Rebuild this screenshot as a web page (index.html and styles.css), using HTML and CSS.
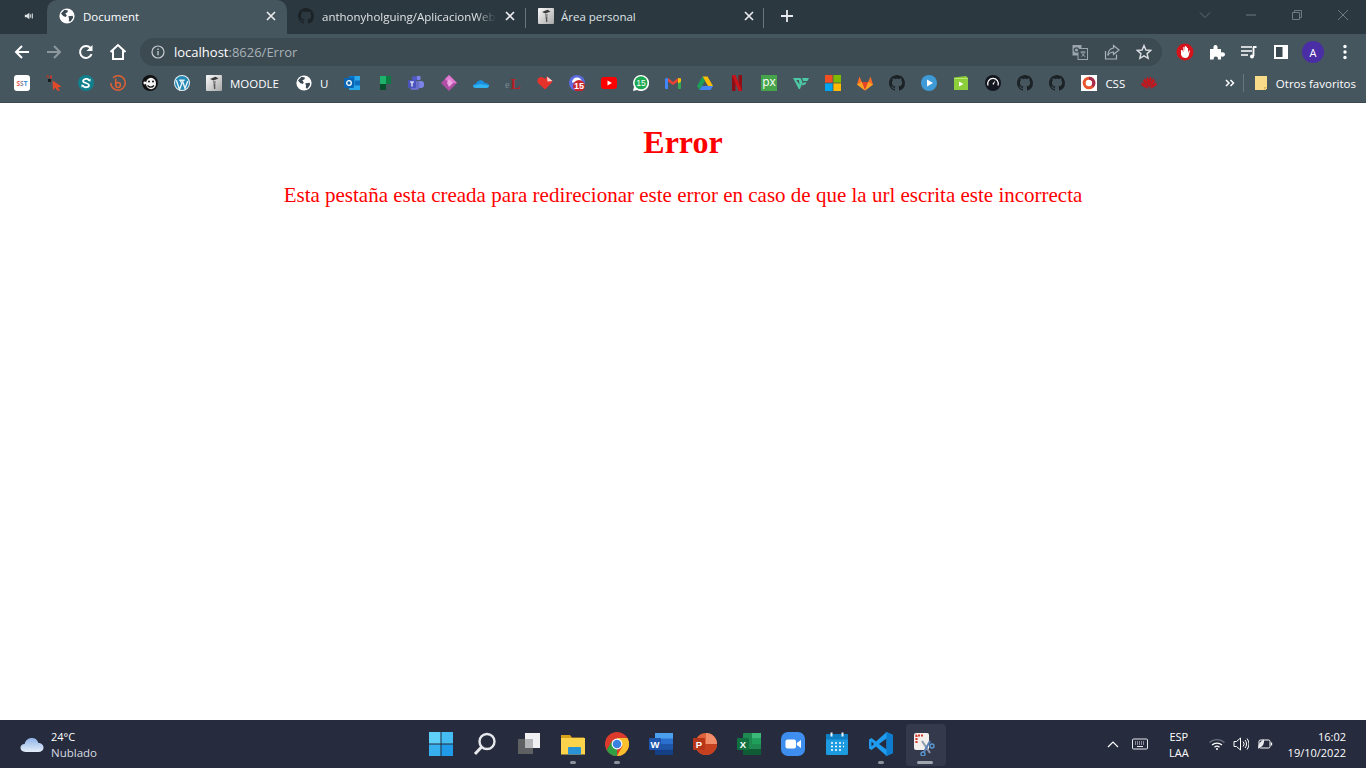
FILE: index.html
```html
<!DOCTYPE html>
<html lang="es">
<head>
<meta charset="utf-8">
<title>Document</title>
<link rel="stylesheet" href="styles.css">
</head>
<body>
<svg class="defs" aria-hidden="true">
  <symbol id="globe" viewBox="0 0 16 16"><circle cx="8" cy="8" r="7.6" fill="#fff"/><path d="M2 5.500 5.500 1.800 9 2.600 8.300 4.600 6.300 5.200 7.800 7.400 6.600 9 4.200 8.100ZM9.300 8.200 13.800 7.800 14 10 11.500 13.600 9.800 13.200 10 10.600Z" fill="#3b4952"/></symbol>
  <symbol id="gh" viewBox="0 0 16 16"><path fill="#1c2327" d="M8 0C3.58 0 0 3.58 0 8c0 3.54 2.29 6.53 5.47 7.59.4.07.55-.17.55-.38 0-.19-.01-.82-.01-1.49-2.01.37-2.53-.49-2.69-.94-.09-.23-.48-.94-.82-1.13-.28-.15-.68-.52-.01-.53.63-.01 1.08.58 1.23.82.72 1.21 1.87.87 2.33.66.07-.52.28-.87.51-1.07-1.78-.2-3.64-.89-3.64-3.95 0-.87.31-1.59.82-2.15-.08-.2-.36-1.02.08-2.12 0 0 .67-.21 2.2.82.64-.18 1.32-.27 2-.27.68 0 1.36.09 2 .27 1.53-1.04 2.2-.82 2.2-.82.44 1.1.16 1.92.08 2.12.51.56.82 1.27.82 2.15 0 3.07-1.87 3.75-3.65 3.95.29.25.54.73.54 1.48 0 1.07-.01 1.93-.01 2.2 0 .21.15.46.55.38A8.013 8.013 0 0016 8c0-4.42-3.58-8-8-8z"/></symbol>
  <symbol id="moodle" viewBox="0 0 16 16"><defs><linearGradient id="mg" x1="0" y1="0" x2="1" y2="1"><stop offset="0" stop-color="#fafafa"/><stop offset="1" stop-color="#a8a8a8"/></linearGradient></defs><rect width="16" height="16" rx="1" fill="url(#mg)"/><path d="M4 4 9.500 1.800 12.500 3.600 7.500 5.500Z" fill="#3a3a3a"/><path d="M7 6h2.800l-.3 3 .2 5H8L7.300 9Z" fill="#8a8a8a"/><path d="M8.500 9v5" stroke="#4a4a4a" stroke-width=".8"/></symbol>
  <symbol id="close" viewBox="0 0 12 12"><path d="M2 2l8 8M10 2l-8 8" stroke="#e8eaed" stroke-width="1.7" fill="none"/></symbol>
</svg>

<div class="browser">
  <header class="tabstrip">
    <div class="tab-pinned">
      <svg class="i10" viewBox="0 0 12 12"><path d="M1 4.500h2.200L6.500 2v8L3.200 7.500H1Z" fill="#dfe3e6"/><path d="M8 4v4M10 3v6" stroke="#dfe3e6" stroke-width="1.200"/></svg>
    </div>
    <div class="tab tab-active">
      <svg class="i16"><use href="#globe"/></svg>
      <span class="tab-title">Document</span>
      <svg class="i12"><use href="#close"/></svg>
    </div>
    <div class="tab tab-gh">
      <svg class="i16"><use href="#gh"/></svg>
      <span class="tab-title tab-fade">anthonyholguing/AplicacionWeb</span>
      <svg class="i12"><use href="#close"/></svg>
    </div>
    <div class="tab tab-sep">
      <svg class="i16"><use href="#moodle"/></svg>
      <span class="tab-title">Área personal</span>
      <svg class="i12"><use href="#close"/></svg>
    </div>
    <button class="newtab">
      <svg class="i14" viewBox="0 0 14 14"><path d="M7 1v12M1 7h12" stroke="#e8eaed" stroke-width="1.800"/></svg>
    </button>
    <div class="winctl">
      <svg class="ctl" viewBox="0 0 12 12"><path d="M1 3.500 6 8.500 11 3.500" stroke="#5f6c75" fill="none"/></svg>
      <svg class="ctl" viewBox="0 0 12 12"><path d="M1 6h10" stroke="#6d7a83"/></svg>
      <svg class="ctl" viewBox="0 0 12 12"><path d="M1.500 3.500h7v7h-7ZM3.500 3.500v-2h7v7h-2" stroke="#6d7a83" fill="none"/></svg>
      <svg class="ctl" viewBox="0 0 12 12"><path d="M1 1l10 10M11 1 1 11" stroke="#6d7a83" fill="none"/></svg>
    </div>
  </header>

  <nav class="toolbar">
    <div class="navbtn"><svg class="i16" viewBox="0 0 16 16"><path d="M15 8H2M8 2 2 8l6 6" stroke="#fff" stroke-width="2" fill="none"/></svg></div>
    <div class="navbtn"><svg class="i16" viewBox="0 0 16 16"><path d="M1 8h13M8 2l6 6-6 6" stroke="#8c979e" stroke-width="2" fill="none"/></svg></div>
    <div class="navbtn"><svg class="i16" viewBox="0 0 16 16"><path d="M13.600 10.200A6 6 0 1 1 12.600 4" stroke="#fff" stroke-width="2" fill="none"/><path d="M14.500 1v6h-6Z" fill="#fff"/></svg></div>
    <div class="navbtn"><svg class="i18" viewBox="0 0 18 18"><path d="M1.500 9 9 2l7.500 7M4 7.500V16h10V7.500" stroke="#fff" stroke-width="2" fill="none"/></svg></div>
    <div class="omnibox">
      <svg class="i14" viewBox="0 0 14 14"><circle cx="7" cy="7" r="6" stroke="#c6ccd0" stroke-width="1.200" fill="none"/><path d="M7 6v4.200M7 3.600v1.300" stroke="#c6ccd0" stroke-width="1.300"/></svg>
      <span class="url"><span class="host">localhost</span><span class="path">:8626/Error</span></span>
      <div class="omni-actions">
        <svg class="i16" viewBox="0 0 16 16"><rect x="0.500" y="1" width="9" height="10.500" fill="#9aa4aa"/><rect x="6" y="4.500" width="9.500" height="11" fill="#3c4a52" stroke="#9aa4aa"/><circle cx="4.500" cy="6" r="2.200" fill="none" stroke="#3c4a52" stroke-width="1.200"/><path d="M8.500 8h5M11 7v1M9.500 8c.5 2 2 4 3.800 4.500M12.500 8c-.5 2-1.500 3.500-3 4.500" stroke="#9aa4aa" fill="none"/></svg>
        <svg class="i16" viewBox="0 0 16 16"><path d="M1.500 7v8h11v-4.500" stroke="#aab3b9" stroke-width="1.200" fill="none"/><path d="M9.500 1.500 15 6 9.500 10.500V8C6.500 8 5 9.500 3.800 11.500 4 7.500 6 4.500 9.500 4Z" stroke="#aab3b9" stroke-width="1.200" fill="none"/></svg>
        <svg class="i16" viewBox="0 0 16 16"><path d="M8 1.500 9.900 6 14.800 6.400 11.100 9.600 12.200 14.400 8 11.900 3.800 14.400 4.900 9.600 1.200 6.400 6.100 6Z" stroke="#d9dde0" stroke-width="1.400" fill="none"/></svg>
      </div>
    </div>
    <div class="extensions">
      <div class="navbtn"><svg class="i18" viewBox="0 0 18 18"><circle cx="9" cy="9" r="8.500" fill="#d5131b"/><path d="M5 8v3.500C5.500 14 7.500 15 9.500 15c2 0 3.300-1.500 3.500-3.500l1-4-1 0-1 2.500V5h-1v3.500V3.700H9.800V8.500V3H8.800v5.500L8.300 4H7.300v5.500L6.300 7H5Z" fill="#fff"/></svg></div>
      <div class="navbtn"><svg class="i16" viewBox="0 0 16 16"><path d="M1 5h3.500C4 2.500 5 1 6.500 1S9 2.500 8.500 5H12v3.500C14.500 8 16 9 16 10.500S14.500 13 12 12.500V15.500H8.800C9.300 13.500 8.300 12.500 6.800 12.500S4.300 13.500 4.800 15.500H1Z" fill="#fff"/></svg></div>
      <div class="navbtn"><svg class="i16" viewBox="0 0 16 16"><path d="M0 3h11M0 7h11M0 11h7" stroke="#fff" stroke-width="1.400"/><path d="M12 3h3.500M12.500 3v9" stroke="#fff" stroke-width="1.800" fill="none"/><circle cx="11" cy="12.500" r="2" fill="#fff"/></svg></div>
      <div class="navbtn"><svg class="i14" viewBox="0 0 14 14"><rect width="14" height="14" fill="#fff"/><rect x="2" y="2" width="6.500" height="10" fill="#3a4851"/></svg></div>
      <div class="navbtn"><span class="avatar">A</span></div>
      <div class="navbtn"><svg class="i16" viewBox="0 0 16 16"><circle cx="8" cy="2.500" r="1.700" fill="#fff"/><circle cx="8" cy="8" r="1.700" fill="#fff"/><circle cx="8" cy="13.500" r="1.700" fill="#fff"/></svg></div>
    </div>
  </nav>

  <div class="bookmarks">
    <div class="bm"><svg class="i16" viewBox="0 0 16 16"><rect width="16" height="16" rx="3" fill="#fff"/><text x="8" y="10.700" class="t-sst"><tspan fill="#e2574c">S</tspan><tspan fill="#8a8a8a">S</tspan><tspan fill="#3e8ed0">T</tspan></text></svg></div>
    <div class="bm"><svg class="i16" viewBox="0 0 16 16"><path d="M6.500 5.500 15.500 11.500 12 12.500 14 16 11 15.500 9.500 12.500 7 15Z" fill="#e0492a"/><rect x="0.500" y="0.500" width="2.500" height="2" fill="#b03a30"/><rect x="4" y="0.500" width="2" height="3" fill="#c43a2c"/><rect x="2" y="4" width="3" height="3" fill="#1b1b1b"/></svg></div>
    <div class="bm"><svg class="i16" viewBox="0 0 16 16"><circle cx="8" cy="8" r="8" fill="#11808d"/><path d="M11 5C9.500 3.200 5.500 3.500 5 6c-.4 2 6 2 6 4.200 0 2.200-4 2.800-6 1" stroke="#fff" stroke-width="1.800" fill="none"/><path d="M9.500 5.800 12.500 6.500 12.500 3.500ZM6.500 10.200 3.500 9.500 3.500 12.500Z" fill="#fff"/></svg></div>
    <div class="bm"><svg class="i16" viewBox="0 0 16 16"><path d="M3 2.800A7.200 7.200 0 1 1 .8 8" stroke="#dd6134" stroke-width="1.500" fill="none"/><path d="M5.700 3.500v7" stroke="#dd6134" stroke-width="1.500"/><circle cx="8" cy="10" r="2.400" stroke="#dd6134" stroke-width="1.500" fill="none"/></svg></div>
    <div class="bm"><svg class="i16" viewBox="0 0 16 16"><circle cx="8" cy="8" r="8" fill="#111"/><ellipse cx="9" cy="8.500" rx="5" ry="5.700" fill="#f4f4f4"/><circle cx="7" cy="6.500" r="1" fill="#111"/><circle cx="11" cy="6.500" r="1" fill="#111"/><path d="M5.500 10.500c2 2 4.500 2 6.500 0" stroke="#111" stroke-width="1.200" fill="none"/><circle cx="2.800" cy="8" r="1.400" fill="#f4f4f4"/></svg></div>
    <div class="bm"><svg class="i16" viewBox="0 0 16 16"><circle cx="8" cy="8" r="8" fill="#e8f1f6"/><circle cx="8" cy="8" r="7" fill="#2288b4"/><path d="M2.300 5.300 5.500 14.500 7.800 8.500 6.300 5.300M5.200 5.300h5.400M8.300 5.300 11 13.500 13.800 6" stroke="#e8f1f6" stroke-width="1.400" fill="none"/></svg></div>
    <div class="bm bm-label bm-moodle"><svg class="i16"><use href="#moodle"/></svg><span>MOODLE</span></div>
    <div class="bm bm-label"><svg class="i16"><use href="#globe"/></svg><span>U</span></div>
    <div class="bm"><svg class="i16" viewBox="0 0 16 16"><rect x="5" y="1" width="11" height="14" fill="#28a8ea"/><rect x="5" y="1" width="5.500" height="4.500" fill="#0078d4"/><rect x="10.500" y="5.500" width="5.500" height="5" fill="#0f6cbd"/><rect x="0" y="3" width="10" height="10" rx="1" fill="#0a64b4"/><circle cx="5" cy="8" r="2.300" stroke="#fff" stroke-width="1.300" fill="none"/></svg></div>
    <div class="bm"><svg class="i16" viewBox="0 0 16 16"><path d="M4 1h11v8H10v6H4Z" fill="#0f7b43"/><path d="M4 1h6v8H4Z" fill="#1fb26a"/><path d="M4 9h6v6L4 15Z" fill="#0a4f2d"/></svg></div>
    <div class="bm"><svg class="i16" viewBox="0 0 16 16"><circle cx="10.500" cy="3" r="2.300" fill="#7b83eb"/><rect x="9" y="6" width="7" height="7" rx="3" fill="#7b83eb"/><circle cx="6.500" cy="3.500" r="2.500" fill="#5059c9"/><rect x="2" y="6" width="9.500" height="9" rx="3" fill="#6a70c9"/><rect x="0" y="5" width="8" height="8" rx="1" fill="#4b53bc"/><path d="M2 7h4M4 7v4.500" stroke="#fff" stroke-width="1.200"/></svg></div>
    <div class="bm bm-wide"><svg class="i16" viewBox="0 0 16 16"><path d="M8 0 16 8 8 16 0 8Z" fill="#b04fa3"/><path d="M8 0 16 8 8 8 4 4Z" fill="#e37ad1"/><path d="M8 4 12 8 8 12 6 8Z" fill="#f0a8e3"/></svg></div>
    <div class="bm"><svg class="i16" viewBox="0 0 16 16"><path d="M3.500 13C1.500 13 0 12 .1 10.700.2 9.300 1.500 8.500 3 8.700 4 6 7 4.500 9.500 5.700c1 .5 1.800 1.300 2.200 2.300 2-.4 4.300.6 4.300 2.500S14.500 13 13 13Z" fill="#1a8fe0"/><path d="M3.500 13C1.500 13 0 12 .1 10.700L7 9 16 10.500C16 12 14.500 13 13 13Z" fill="#30b3f0"/></svg></div>
    <div class="bm"><svg class="i16" viewBox="0 0 16 16"><text x="0" y="13" class="t-el">e</text><text x="5.500" y="14" class="t-ell">L</text></svg></div>
    <div class="bm"><svg class="i16" viewBox="0 0 16 16"><path d="M8 14.500 1 8C-.6 5.500 1 2 4 2c1.500 0 3 .8 4 2l2-2.500L15.500 6 14.500 8Z" fill="#e5332c"/><path d="M10 1.500 15.500 6l-5 .5Z" fill="#f7d5d2"/></svg></div>
    <div class="bm"><svg class="i16" viewBox="0 0 16 16"><circle cx="8" cy="8" r="8" fill="#5d6be0"/><path d="M3 7.500a5 5 0 0 1 10 0" fill="#fff"/><circle cx="10" cy="11" r="6" fill="#c9252d"/><text x="10" y="14.300" class="t-badge">15</text></svg></div>
    <div class="bm"><svg class="i16" viewBox="0 0 16 16"><rect y="2" width="16" height="12" rx="3" fill="#f00"/><path d="M6.500 5.500v5L11 8Z" fill="#fff"/></svg></div>
    <div class="bm"><svg class="i16" viewBox="0 0 16 16"><path d="M8 0a8 8 0 1 1-3.800 15L0 16l1-4.200A8 8 0 0 1 8 0Z" fill="#fff"/><circle cx="8" cy="7.800" r="6.500" fill="#1da851"/><text x="8" y="11" class="t-wa">15</text></svg></div>
    <div class="bm"><svg class="i16" viewBox="0 0 16 16"><path d="M0 3.500 3 3v11H1a1 1 0 0 1-1-1Z" fill="#4285f4"/><path d="M13 3l3 .5V13a1 1 0 0 1-1 1h-2Z" fill="#34a853"/><path d="M3 3 8 7l5-4v3.500L8 10 3 6.500Z" fill="#ea4335"/><path d="M13 3l3 .5v3l-3 2Z" fill="#fbbc04"/></svg></div>
    <div class="bm"><svg class="i16" viewBox="0 0 16 16"><path d="M5.500 1.500h5L16 11h-5Z" fill="#fbbc04"/><path d="M5.500 1.500 0 11l2.500 4L8 6Z" fill="#1e9e5a"/><path d="M2.500 15h11L16 11H5Z" fill="#4285f4"/></svg></div>
    <div class="bm"><svg class="i16" viewBox="0 0 16 16"><rect x="3" width="3.500" height="16" fill="#8f0d14"/><rect x="9.500" width="3.500" height="16" fill="#8f0d14"/><path d="M3 0h3.500L13 16H9.500Z" fill="#c9141c"/></svg></div>
    <div class="bm"><svg class="i16" viewBox="0 0 16 16"><rect width="16" height="16" fill="#46a54a"/><text x="8" y="11" class="t-px">px</text></svg></div>
    <div class="bm"><svg class="i16" viewBox="0 0 16 16"><path d="M0 3h7.500L9.500 7 7 14 5.800 14Z" fill="#4dc9a5"/><path d="M3.200 5h2.700L6.500 9.500Z" fill="#46565f"/><path d="M9 3h7L14.500 6H10.200ZM9.500 8 13.500 7 12.300 9.500 8.700 10.500Z" fill="#4dc9a5"/></svg></div>
    <div class="bm"><svg class="i16" viewBox="0 0 16 16"><rect width="7.600" height="7.600" fill="#f25022"/><rect x="8.400" width="7.600" height="7.600" fill="#7fba00"/><rect y="8.400" width="7.600" height="7.600" fill="#00a4ef"/><rect x="8.400" y="8.400" width="7.600" height="7.600" fill="#ffb900"/></svg></div>
    <div class="bm"><svg class="i16" viewBox="0 0 16 16"><path d="M8 15.500 0 9.500 2.500 1.500 4.800 7h6.400l2.300-5.500L16 9.500Z" fill="#fc6d26"/><path d="M8 15.500 4.800 7h6.400Z" fill="#e24329"/><path d="M0 9.500 8 15.500 4.800 7ZM16 9.500 8 15.500 11.200 7Z" fill="#fca326"/></svg></div>
    <div class="bm"><svg class="i16"><use href="#gh"/></svg></div>
    <div class="bm"><svg class="i16" viewBox="0 0 16 16"><circle cx="8" cy="8" r="8" fill="#3f9bd8"/><path d="M6 4.500v7L12 8Z" fill="#fff"/></svg></div>
    <div class="bm"><svg class="i16" viewBox="0 0 16 16"><path d="M1 2.500 13 1 15 3v12H1Z" fill="#8ccf3a"/><path d="M1 3h14v1H1Z" fill="#b7e66a"/><path d="M6 6.500v5L10.500 9Z" fill="#fff"/></svg></div>
    <div class="bm"><svg class="i16" viewBox="0 0 16 16"><circle cx="8" cy="8" r="8" fill="#13161f"/><path d="M3 10.500A5.300 5.300 0 1 1 13 10.500" stroke="#fff" stroke-width="1.200" fill="none"/><path d="M7.300 9 10.500 5.200 8.700 9.800Z" fill="#fff"/></svg></div>
    <div class="bm"><svg class="i16"><use href="#gh"/></svg></div>
    <div class="bm"><svg class="i16"><use href="#gh"/></svg></div>
    <div class="bm bm-label"><svg class="i16" viewBox="0 0 16 16"><rect width="16" height="16" fill="#fff"/><circle cx="8" cy="8" r="4.800" stroke="#e8552d" stroke-width="3" fill="none"/><path d="M8 3.200a4.800 4.800 0 0 1 3.400 8.200" stroke="#a62b4c" stroke-width="3" fill="none"/></svg><span>CSS</span></div>
    <div class="bm"><svg class="i16" viewBox="0 0 16 16"><path d="M8 13.500 5.300 3.500 7 1.500 8 5 9 1.500 10.700 3.500ZM7 13.500 2 6 3.800 3 6.300 7.500ZM9 13.500 14 6 12.200 3 9.700 7.500ZM6.500 14 0 10 1 7 5 10.500ZM9.500 14 16 10 15 7 11 10.500Z" fill="#c4161c"/></svg></div>
    <div class="bm-end">
      <svg class="i10" viewBox="0 0 10 10"><path d="M1 2l3 3-3 3M5.500 2l3 3-3 3" stroke="#fff" stroke-width="1.500" fill="none"/></svg>
      <i class="bm-divider"></i>
      <div class="bm-folder">
        <svg class="i16" viewBox="0 0 16 16"><path d="M2 1h12v12.500L12.500 15H2Z" fill="#f8dc8a"/><path d="M11 15l3-3h-3Z" fill="#dcb85a"/></svg>
        <span>Otros favoritos</span>
      </div>
    </div>
  </div>
</div>

<main class="page">
  <h1>Error</h1>
  <p>Esta pestaña esta creada para redirecionar este error en caso de que la url escrita este incorrecta</p>
</main>

<footer class="taskbar">
  <div class="weather">
    <svg class="cloud" viewBox="0 0 26 18"><defs><linearGradient id="cg" x1="0" y1="0" x2="0" y2="1"><stop offset="0" stop-color="#8fb3e8"/><stop offset="1" stop-color="#e4edf9"/></linearGradient></defs><path d="M6 17C2.500 17 .5 15 .5 12.500S2.500 8.500 5 8.500C6 4 9.500 2 13 2c3.500 0 6 2 7 5.500 3 0 5.500 2 5.500 5S23 17 20 17Z" fill="url(#cg)"/></svg>
    <div class="weather-text"><span class="temp">24°C</span><span class="cond">Nublado</span></div>
  </div>
  <div class="apps">
    <div class="app"><svg class="i24" viewBox="0 0 24 24"><rect width="11.500" height="11.500" fill="#5fd0f7"/><rect x="12.500" width="11.500" height="11.500" fill="#45bdf3"/><rect y="12.500" width="11.500" height="11.500" fill="#37b0f0"/><rect x="12.500" y="12.500" width="11.500" height="11.500" fill="#1f9be8"/></svg></div>
    <div class="app"><svg class="i24" viewBox="0 0 24 24"><circle cx="14" cy="9.500" r="7.500" stroke="#e6e8ec" stroke-width="2.400" fill="none"/><path d="M8.500 15 2 22" stroke="#e6e8ec" stroke-width="3"/></svg></div>
    <div class="app"><svg class="i24" viewBox="0 0 24 24"><rect x="1" y="7" width="15" height="15" fill="#5f6062"/><rect x="8" y="1" width="15" height="15" fill="#f0f0f2"/><rect x="8" y="7" width="8" height="9" fill="#b4b5b8"/></svg></div>
    <div class="app app-on"><svg class="i24" viewBox="0 0 24 24"><path d="M0 3h9l2 2.500h12V9H0Z" fill="#d9a21b"/><path d="M0 6h24v16.500H0Z" fill="#fcd34a"/><rect x="7" y="15" width="13" height="7.500" rx="1" fill="#2a93d5"/></svg></div>
    <div class="app app-on"><svg class="i24" viewBox="0 0 24 24"><circle cx="12" cy="12" r="12" fill="#dd3a2e"/><path d="M12 24A12 12 0 0 1 1.600 18L7 9l5 3Z" fill="#2f9e44"/><path d="M12 24 17.500 14 12 6h10.400A12 12 0 0 1 12 24Z" fill="#fbc02d"/><circle cx="12" cy="12" r="5.400" fill="#fff"/><circle cx="12" cy="12" r="4.300" fill="#3b82e0"/></svg></div>
    <div class="app"><svg class="i24" viewBox="0 0 24 24"><rect x="6" y="1" width="18" height="22" rx="1" fill="#2b6fce"/><rect x="6" y="1" width="18" height="5.500" fill="#4aa0ec"/><rect x="6" y="12" width="18" height="5.500" fill="#1f56a8"/><rect x="6" y="17.500" width="18" height="5.500" fill="#153f85"/><rect y="6" width="12" height="12" rx="1" fill="#1d55ad"/><text x="6" y="15.500" class="t-app">W</text></svg></div>
    <div class="app"><svg class="i24" viewBox="0 0 24 24"><circle cx="13" cy="12" r="11" fill="#e0623a"/><path d="M13 1a11 11 0 0 1 11 11H13Z" fill="#f28d6a"/><path d="M13 23a11 11 0 0 1-8-3.500V12h19a11 11 0 0 1-11 11Z" fill="#c4401f"/><rect y="6" width="12" height="12" rx="1" fill="#b7361a"/><text x="6" y="15.500" class="t-app">P</text></svg></div>
    <div class="app"><svg class="i24" viewBox="0 0 24 24"><rect x="6" y="1" width="18" height="22" rx="1" fill="#1e8a51"/><rect x="15" y="1" width="9" height="5.500" fill="#3cb878"/><rect x="15" y="6.500" width="9" height="5.500" fill="#1f9e5c"/><rect x="6" y="17" width="18" height="6" fill="#0f5c34"/><rect y="6" width="12" height="12" rx="1" fill="#107040"/><text x="6" y="15.500" class="t-app">X</text></svg></div>
    <div class="app"><svg class="i24" viewBox="0 0 24 24"><rect width="24" height="24" rx="7" fill="#3e8ef0"/><rect x="4.500" y="7.500" width="10.500" height="9" rx="2" fill="#fff"/><path d="M15.800 11 20 8v8l-4.200-3Z" fill="#fff"/></svg></div>
    <div class="app"><svg class="i24" viewBox="0 0 24 24"><rect x="1" y="2" width="22" height="21" rx="1.500" fill="#1d9be0"/><rect x="1" y="2" width="22" height="5.500" fill="#0f7fc4"/><rect x="5.500" y="0.500" width="2" height="4" fill="#e8f5fd"/><rect x="16.500" y="0.500" width="2" height="4" fill="#e8f5fd"/><path d="M6 11h2M10 11h2M14 11h2M18 11h1M6 14.500h2M10 14.500h2M14 14.500h2M18 14.500h1M6 18h2M10 18h2M14 18h2" stroke="#fff" stroke-width="1.500"/></svg></div>
    <div class="app app-on"><svg class="i24" viewBox="0 0 24 24"><path d="M17.500 0 24 3v18l-6.500 3L7 14.500 2.500 18 0 16.500V7.500L2.500 6 7 9.500Z" fill="#1f9cf0"/><path d="M17.500 6.500v11L10 12Z" fill="#262b3d"/><path d="M2.500 9.500v5L5 12Z" fill="#262b3d"/><path d="M17.500 0 24 3v18l-6.500 3Z" fill="#0d7ccf"/></svg></div>
    <div class="app app-active"><svg class="i24" viewBox="0 0 24 24"><rect x="1" y="1" width="15" height="17" rx="2" fill="#f2efec"/><path d="M3.500 11V3.500H11" stroke="#d33a2c" stroke-width="2.200" stroke-dasharray="2 1" fill="none"/><path d="M9 9 17 21" stroke="#8d99ae" stroke-width="2"/><path d="M17 9 11 20" stroke="#5a7fb5" stroke-width="2"/><circle cx="10" cy="22" r="2" stroke="#5a9bd5" fill="none" stroke-width="1.300"/><circle cx="19" cy="14" r="2" stroke="#5a9bd5" fill="none" stroke-width="1.300"/></svg></div>
  </div>
  <div class="tray">
    <svg class="chev" viewBox="0 0 12 8"><path d="M1 7 6 2l5 5" stroke="#fff" stroke-width="1.200" fill="none"/></svg>
    <svg class="kbd" viewBox="0 0 16 12"><rect x=".5" y="1" width="15" height="10" rx="1" stroke="#e8eaed" fill="none"/><path d="M3 4h10M3 6h10" stroke="#e8eaed" stroke-dasharray="1 1"/><path d="M5 8.500h6" stroke="#e8eaed"/></svg>
    <div class="lang"><span>ESP</span><span>LAA</span></div>
    <svg class="wifi" viewBox="0 0 16 12"><path d="M.5 4.500a11 11 0 0 1 15 0" stroke="#6c7280" stroke-width="1.200" fill="none"/><path d="M3 7a7.500 7.500 0 0 1 10 0M5.500 9.300a3.800 3.800 0 0 1 5 0" stroke="#fff" stroke-width="1.200" fill="none"/><circle cx="8" cy="11" r="1" fill="#fff"/></svg>
    <svg class="vol" viewBox="0 0 16 14"><path d="M1 4.500h2.500L7.500 1v12L3.500 9.500H1Z" stroke="#fff" fill="none"/><path d="M10 4.500a3.500 3.500 0 0 1 0 5M12 3a6 6 0 0 1 0 8M14 1.500a8.500 8.500 0 0 1 0 11" stroke="#fff" fill="none"/></svg>
    <svg class="batt" viewBox="0 0 16 12"><rect x="2" y="2" width="11" height="8" rx="1.500" stroke="#fff" fill="none"/><path d="M14.500 4.500v3" stroke="#fff" stroke-width="1.300"/><path d="M1 11C1 6 4 2.500 7 1.500 7.500 6 5.500 9 2.500 9.500Z" fill="#e8eaed"/></svg>
    <div class="clock"><span>16:02</span><span>19/10/2022</span></div>
  </div>
</footer>
</body>
</html>
```

FILE: styles.css
```css
* { box-sizing: border-box; }
html, body { height: 100%; }
body {
  margin: 0;
  height: 768px;
  overflow: hidden;
  display: flex;
  flex-direction: column;
  background: #fff;
  font-family: "Open Sans", "Noto Sans", sans-serif;
}
.defs { width: 0; height: 0; position: absolute; }
svg { display: block; flex: none; }
.i10 { width: 10px; height: 10px; }
.i12 { width: 12px; height: 12px; }
.i14 { width: 14px; height: 14px; }
.i16 { width: 16px; height: 16px; }
.i18 { width: 18px; height: 18px; }
.i24 { width: 24px; height: 24px; }

/* browser chrome */
.browser { flex: none; background: #46565f; border-bottom: 1px solid #3a474f; }
.tabstrip { height: 34px; display: flex; background: #2c3840; align-items: stretch; }
.tab-pinned { width: 47px; display: flex; align-items: center; justify-content: center; padding-left: 10px; padding-bottom: 2px; background: #2c3840; }
.tab {
  width: 239px;
  display: flex;
  align-items: center;
  gap: 8px;
  padding: 0 10px 2px 12px;
  color: #dfe3e6;
  font-size: 11.5px;
  position: relative;
}
.tab-active { width: 240px; background: #46565f; border-radius: 10px 10px 0 0; color: #fff; }
.tab-gh { padding-left: 11px; }
.tab-sep { width: 238px; padding-right: 9px; gap: 7px; }
.tab-title { flex: 1; white-space: nowrap; overflow: hidden; min-width: 0; }
.tab-fade { -webkit-mask-image: linear-gradient(to right, #000 88%, transparent); mask-image: linear-gradient(to right, #000 88%, transparent); }
.tab-sep::before, .tab-sep::after {
  content: "";
  position: absolute;
  top: 8px;
  bottom: 6px;
  width: 1px;
  background: #6a767e;
}
.tab-sep::before { left: -1px; }
.tab-sep::after { right: 0; }
.newtab { width: 46px; background: none; border: 0; padding: 0 0 2px; display: flex; align-items: center; justify-content: center; }
.winctl { margin-left: auto; display: flex; align-items: center; }
.ctl { width: 46px; height: 12px; margin-bottom: 4px; }

.toolbar { height: 32px; display: flex; align-items: flex-end; padding-left: 6px; }
.navbtn { width: 32px; height: 28px; display: flex; align-items: center; justify-content: center; }
.omnibox {
  width: 1022px;
  height: 28px;
  margin-left: 6px;
  background: #3c4a52;
  border-radius: 14px;
  display: flex;
  align-items: center;
  padding: 0 10px 0 11px;
}
.url { margin-left: 9px; font-size: 13px; white-space: nowrap; }
.host { color: #fff; }
.path { color: #a9b2b8; }
.omni-actions { margin-left: auto; display: flex; gap: 16px; }
.extensions { display: flex; margin-left: 7px; }
.avatar {
  width: 22px; height: 22px; border-radius: 50%;
  background: #4a2ea6; color: #fff;
  font-size: 11px;
  display: flex; align-items: center; justify-content: center;
}

.bookmarks { height: 36px; display: flex; align-items: center; padding-left: 6px; color: #fff; font-size: 11.5px; padding-bottom: 2px; }
.bm { width: 32px; height: 28px; display: flex; align-items: center; justify-content: center; flex: none; }
.bm-wide { width: 33px; padding-left: 1px; }
.bm-label { width: auto; padding: 0 8px; justify-content: flex-start; }
.bm-moodle { padding-right: 9px; }
.bm-label span { margin-left: 8px; }
.bm-end { margin-left: auto; display: flex; align-items: center; padding-right: 10px; }
.bm-divider { width: 1px; height: 18px; background: #69767e; margin: 0 9px 0 8px; display: block; }
.bm-folder { display: flex; align-items: center; gap: 7px; }

.t-sst { font: 700 6.5px "Open Sans", sans-serif; text-anchor: middle; }
.t-el { font: 10px "Liberation Serif", serif; fill: #7c8a92; }
.t-ell { font: 700 15px "Liberation Serif", serif; fill: #b51f24; }
.t-badge { font: 700 9px "Liberation Sans", sans-serif; fill: #fff; text-anchor: middle; }
.t-wa { font: 8.5px "Liberation Sans", sans-serif; fill: #fff; text-anchor: middle; }
.t-px { font: 12px "Open Sans", sans-serif; fill: #fff; text-anchor: middle; }
.t-app { font: 700 9.5px "Liberation Sans", sans-serif; fill: #fff; text-anchor: middle; }

/* page */
.page { flex: 1; min-height: 0; color: #f00; font-family: "Liberation Serif", serif; text-align: center; padding: 0 8px; display: flow-root; }
.page h1 { font-size: 32px; font-weight: 700; margin: 21.44px 0; line-height: 37px; }
.page p { font-size: 21px; margin: 21px 0; line-height: 24px; }

/* taskbar */
.taskbar {
  flex: none;
  height: 48px;
  background: #262b3d;
  color: #fff;
  display: grid;
  grid-template-columns: 1fr auto 1fr;
  align-items: center;
  font-size: 11.5px;
}
.weather { display: flex; align-items: center; padding-left: 20px; gap: 7px; }
.cloud { width: 24px; height: 17px; }
.weather-text { display: flex; flex-direction: column; line-height: 16px; padding-top: 2px; }
.temp { font-size: 11px; }
.cond { color: #d8dbe2; }
.apps { display: flex; height: 48px; }
.app { width: 44px; height: 48px; display: flex; align-items: center; justify-content: center; position: relative; }
.app-on::after, .app-active::after {
  content: "";
  position: absolute;
  bottom: 4px;
  left: 19px;
  width: 6px;
  height: 3px;
  border-radius: 2px;
  background: #8d919c;
}
.app-active::before {
  content: "";
  position: absolute;
  inset: 4px 1px 2px 3px;
  background: #343a4b;
  border-radius: 4px;
}
.app-active svg { position: relative; }
.app-active::after { left: 14px; width: 16px; background: #a0a5b0; z-index: 1; }
.tray { display: flex; align-items: center; justify-content: flex-end; padding-right: 20px; }
.chev { width: 12px; height: 8px; margin-right: 13px; }
.kbd { width: 16px; height: 12px; margin-right: 21px; }
.lang { display: flex; flex-direction: column; align-items: center; line-height: 16px; font-size: 11px; margin-right: 20px; padding-top: 2px; }
.wifi { width: 16px; height: 12px; margin-right: 8px; }
.vol { width: 16px; height: 14px; margin-right: 8px; }
.batt { width: 16px; height: 12px; margin-right: 15px; }
.clock { display: flex; flex-direction: column; align-items: flex-end; line-height: 16px; font-size: 11px; padding-top: 1px; }
```
